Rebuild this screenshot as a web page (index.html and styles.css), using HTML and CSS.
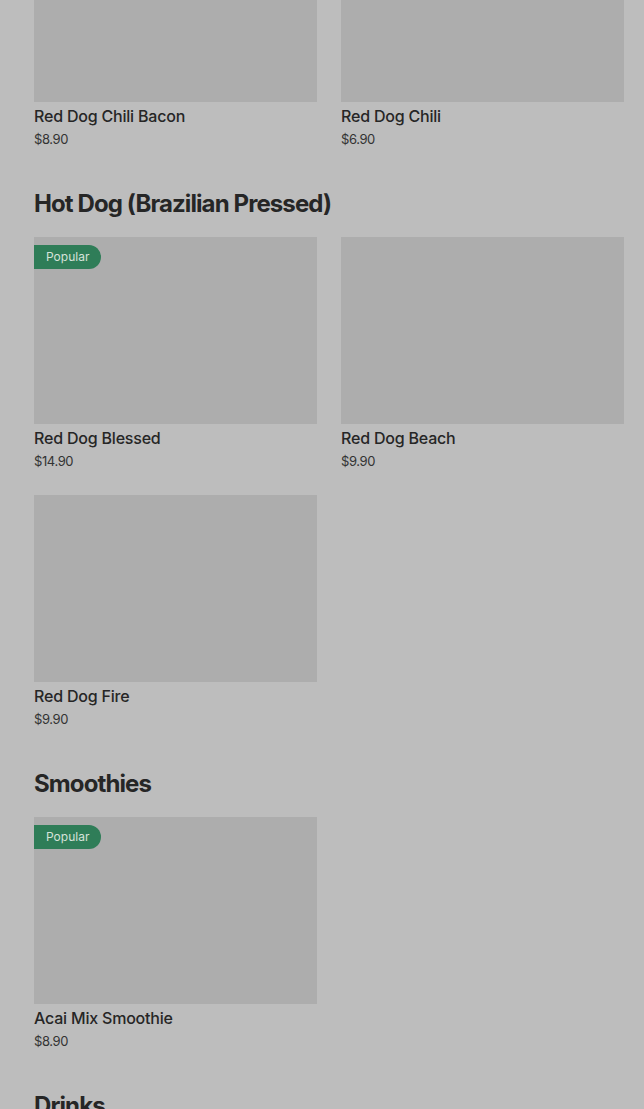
FILE: index.html
```html
<!DOCTYPE html>
<html lang="en">
<head>
    <meta charset="UTF-8">
    <title>Menu</title>
    <link rel="stylesheet" href="styles.css">
</head>
<body>
<div class="menu">
    <section class="section first">
        <div class="items">
            <div class="item">
                <div class="photo"></div>
                <div class="name">Red Dog Chili Bacon</div>
                <div class="price">$8.90</div>
            </div>
            <div class="item">
                <div class="photo"></div>
                <div class="name">Red Dog Chili</div>
                <div class="price">$6.90</div>
            </div>
        </div>
    </section>

    <section class="section">
        <h2>Hot Dog (Brazilian Pressed)</h2>
        <div class="items">
            <div class="item">
                <div class="photo"><span class="badge">Popular</span></div>
                <div class="name">Red Dog Blessed</div>
                <div class="price">$14.90</div>
            </div>
            <div class="item">
                <div class="photo"></div>
                <div class="name">Red Dog Beach</div>
                <div class="price">$9.90</div>
            </div>
            <div class="item">
                <div class="photo"></div>
                <div class="name">Red Dog Fire</div>
                <div class="price">$9.90</div>
            </div>
        </div>
    </section>

    <section class="section">
        <h2>Smoothies</h2>
        <div class="items">
            <div class="item">
                <div class="photo"><span class="badge">Popular</span></div>
                <div class="name">Acai Mix Smoothie</div>
                <div class="price">$8.90</div>
            </div>
        </div>
    </section>

    <section class="section">
        <h2>Drinks</h2>
    </section>
</div>
</body>
</html>
```

FILE: styles.css
```css
body {
  margin: 0;
  background: #bdbdbd;
  font-family: Inter, "Liberation Sans", sans-serif;
  color: #262626;
  overflow: hidden;
}
.menu {
  width: 590px;
  padding-left: 34px;
  margin-top: -85px;
}
.section {
  margin-bottom: 40px;
}
.section h2 {
  margin: 0 0 17px;
  font-size: 24px;
  line-height: 32px;
  font-weight: 700;
  letter-spacing: -0.9px;
}
.items {
  display: grid;
  grid-template-columns: 283px 283px;
  column-gap: 24px;
  row-gap: 25px;
}
.item {
  height: 233px;
}
.photo {
  height: 187px;
  background: #adadad;
  position: relative;
}
.badge {
  position: absolute;
  top: 8px;
  left: 0;
  height: 24px;
  line-height: 24px;
  padding: 0 12px;
  background: #2f7d58;
  color: #d6e2da;
  font-size: 12px;
  border-radius: 0 12px 12px 0;
}
.name {
  margin-top: 2px;
  font-size: 16px;
  line-height: 24px;
  font-weight: 500;
  letter-spacing: -0.2px;
}
.price {
  margin-top: 2px;
  font-size: 13px;
  line-height: 18px;
  color: #333;
  letter-spacing: -0.4px;
}
```
